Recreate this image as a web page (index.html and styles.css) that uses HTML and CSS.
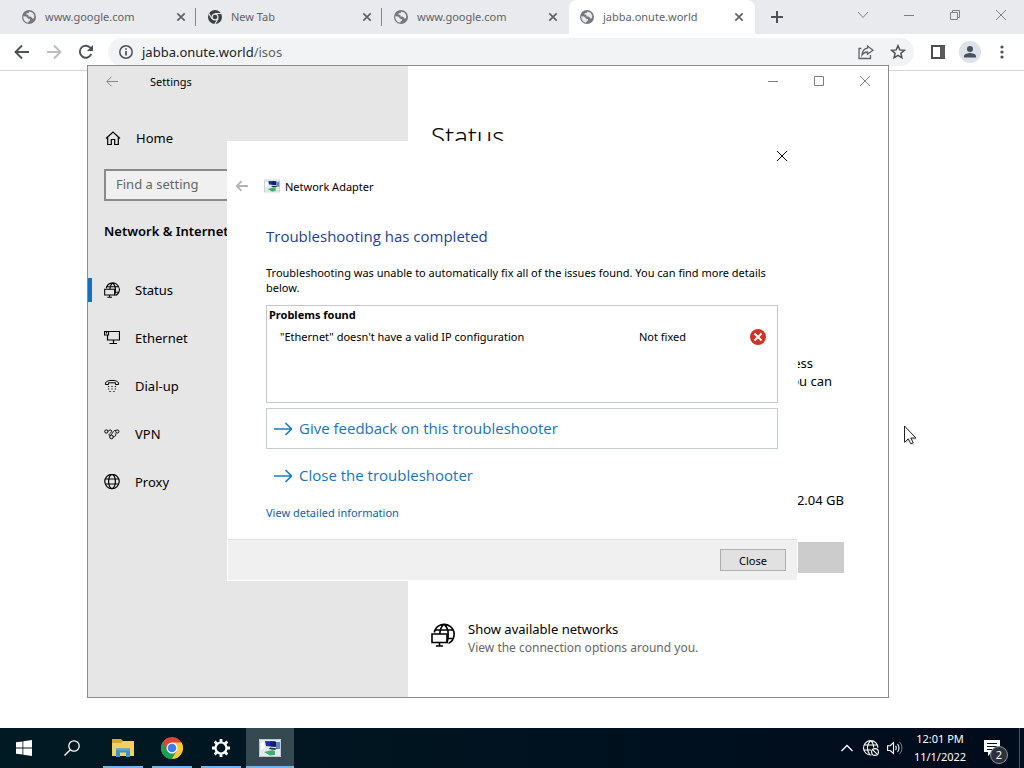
FILE: index.html
```html
<!DOCTYPE html>
<html lang="en">
<head>
  <meta charset="UTF-8" />
  <meta name="viewport" content="width=device-width, initial-scale=1.0" />
  <title>jabba.onute.world/isos</title>
  <link rel="stylesheet" href="styles.css">
</head>
<body>
  <!-- shared icons -->
  <svg class="sprite" width="0" height="0" aria-hidden="true">
    <symbol id="i-world" viewBox="0 0 16 16">
      <circle cx="8" cy="8" r="7" fill="#75787c"/>
      <path d="M8.5 2.6l3.2 1.2 1.6 2.7-.3 2.8-1.8.2-1-1.7-2.6-.2-.4-1.8H5.4l.2-1.6 1.9-.2z" fill="#e8eaed"/>
      <path d="M2.2 7.2l3 .4 2 2.1 1.9.5-.3 1.5-1.3.7-.2 1.4C4.2 13.4 2.2 10.5 2.2 7.2z" fill="#e8eaed"/>
    </symbol>
    <symbol id="i-tabclose" viewBox="0 0 10 10">
      <path d="M1.3 1.3l7.4 7.4M8.7 1.3l-7.4 7.4" stroke="#5f6368" stroke-width="1.7"/>
    </symbol>
    <symbol id="i-close" viewBox="0 0 12 12">
      <path d="M1 1l10 10M11 1L1 11" stroke="currentColor" fill="none"/>
    </symbol>
    <symbol id="i-min" viewBox="0 0 12 12">
      <path d="M1 6.5h10" stroke="currentColor"/>
    </symbol>
    <symbol id="i-back" viewBox="0 0 12 12">
      <path d="M12 5.5H1M5.5 .7L.8 5.5l4.7 4.8" stroke="currentColor" fill="none"/>
    </symbol>
    <symbol id="i-netglobe" viewBox="0 0 24 24">
      <path d="M3.3 9.5A10 10 0 1 1 17.5 20.4M13 1.2C10.5 3.2 9 6.5 8.8 11M13 1.2c2.8 2.5 4.2 6 4.2 9.8 0 3.5-.4 6-1.2 9M4.2 7h17.800M17 15.500h5" fill="none" stroke="currentColor" stroke-width="1.6"/>
      <path d="M1 11h15v8.500H1zM8.500 19.500v3.500M5 23h7" fill="none" stroke="currentColor" stroke-width="1.6"/>
    </symbol>
    <symbol id="i-arrow" viewBox="0 0 18 14">
      <path d="M0 7h17M11.5 1l6 6-6 6" fill="none" stroke="#1a7cc4" stroke-width="1.6"/>
    </symbol>
    <symbol id="i-adapter" viewBox="0 0 22 18">
      <path d="M0 0h22v18H0z" fill="#e4ebef"/>
      <path d="M.5.5h21v17H.5z" fill="none" stroke="#b9c9d2"/>
      <path d="M6 2l10 .5V8L7 7z" fill="#1a2fa0"/>
      <path d="M11 2.3l6 .2V8l-5-.7z" fill="#15206b"/>
      <path d="M17 3h4v7h-4z" fill="#5f86c4"/>
      <path d="M5 13l8-2 3 1v4l-5 .5z" fill="#3fae6a"/>
      <path d="M11 8.5l7 1-2 1.5-6-1z" fill="#20303c"/>
      <path d="M2 4l3-1 1 6-4 2z" fill="#fff"/>
    </symbol>
  </svg>

  <div class="browser">
    <div class="tabstrip">
      <div class="tab">
        <svg class="favicon"><use href="#i-world"/></svg>
        <span>www.google.com</span>
        <button aria-label="Close tab"><svg width="10" height="10"><use href="#i-tabclose"/></svg></button>
      </div>
      <div class="tab">
        <svg class="favicon" viewBox="0 0 16 16">
          <circle cx="8" cy="8" r="7" fill="#3c4043"/>
          <path d="M8 4.5h6.5M5 9.8L1.7 4.3M11 9.8L7.8 15.2" stroke="#e8eaed" stroke-width="1.2"/>
          <circle cx="8" cy="8" r="3.5" fill="#e8eaed"/>
          <circle cx="8" cy="8" r="2.3" fill="#3c4043"/>
        </svg>
        <span>New Tab</span>
        <button aria-label="Close tab"><svg width="10" height="10"><use href="#i-tabclose"/></svg></button>
      </div>
      <div class="tab last">
        <svg class="favicon"><use href="#i-world"/></svg>
        <span>www.google.com</span>
        <button aria-label="Close tab"><svg width="10" height="10"><use href="#i-tabclose"/></svg></button>
      </div>
      <div class="tab active">
        <svg class="favicon"><use href="#i-world"/></svg>
        <span>jabba.onute.world</span>
        <button aria-label="Close tab"><svg width="10" height="10"><use href="#i-tabclose"/></svg></button>
      </div>
      <button class="new-tab" aria-label="New tab">
        <svg width="12" height="12"><path d="M6 0v12M0 6h12" stroke="#4d5156" stroke-width="2"/></svg>
      </button>
      <div class="caption">
        <button aria-label="Search tabs"><svg width="12" height="12"><path d="M1 3l5 5.5L11 3" stroke="currentColor" fill="none"/></svg></button>
        <button aria-label="Minimize"><svg width="12" height="12"><use href="#i-min"/></svg></button>
        <button aria-label="Restore"><svg width="12" height="12"><path d="M1.5 3.5h7v7h-7zM3.5 3.5v-2h7v7h-2" stroke="currentColor" fill="none"/></svg></button>
        <button aria-label="Close"><svg width="12" height="12"><use href="#i-close"/></svg></button>
      </div>
    </div>
    <div class="toolbar">
      <button aria-label="Back"><svg width="16" height="16" viewBox="0 0 16 16"><path d="M15 8H2M8 1.5L1.5 8 8 14.5" stroke="#4d5156" stroke-width="1.9" fill="none"/></svg></button>
      <button aria-label="Forward"><svg width="16" height="16" viewBox="0 0 16 16"><path d="M1 8h13M8 1.5L14.5 8 8 14.5" stroke="#babcbe" stroke-width="1.9" fill="none"/></svg></button>
      <button aria-label="Reload"><svg width="16" height="16" viewBox="0 0 16 16"><path d="M13.3 10.2A6 6 0 1 1 12.8 4.3" stroke="#4d5156" stroke-width="1.9" fill="none"/><path d="M15 1v6H9z" fill="#4d5156"/></svg></button>
      <div class="omnibox">
        <svg width="16" height="16" viewBox="0 0 16 16"><circle cx="8" cy="8" r="6.2" fill="none" stroke="#4d5156" stroke-width="1.5"/><path d="M8 7v4.5M8 4.2v1.6" stroke="#4d5156" stroke-width="1.7"/></svg>
        <div class="url">jabba.onute.world<span>/isos</span></div>
        <button aria-label="Share"><svg width="16" height="16" viewBox="0 0 16 16"><path d="M3.5 4.5H1v10h11.500V11M9.500 2l5.500 4.200-5.500 4V8C7 8 5.500 8.800 4 11c.3-3.600 2-6.200 5.500-6.800z" fill="none" stroke="#5f6368" stroke-width="1.3"/></svg></button>
        <button aria-label="Bookmark"><svg width="16" height="16" viewBox="0 0 16 16"><path d="M8 1.7l1.8 4.2 4.6.4-3.5 3 1 4.5L8 11.4l-3.9 2.4 1-4.5-3.5-3 4.6-.4z" fill="none" stroke="#4d5156" stroke-width="1.5"/></svg></button>
      </div>
      <div class="tools">
        <button aria-label="Side panel"><svg width="14" height="14"><path d="M1 1h12v12H1z" fill="none" stroke="#4d4d50" stroke-width="2"/><path d="M9 1h5v12H9z" fill="#5a5a5e"/></svg></button>
        <button class="avatar" aria-label="Profile"><svg width="14" height="14"><circle cx="7" cy="4" r="3" fill="#46525e"/><path d="M1 12.5V11c0-2 4-3 6-3s6 1 6 3v1.5z" fill="#46525e"/></svg></button>
        <button aria-label="Menu"><svg width="4" height="14"><circle cx="2" cy="2" r="1.6" fill="#4d5156"/><circle cx="2" cy="7" r="1.6" fill="#4d5156"/><circle cx="2" cy="12" r="1.6" fill="#4d5156"/></svg></button>
      </div>
    </div>
  </div>

  <div class="settings">
    <div class="sidebar">
      <div class="titlebar">
        <button aria-label="Back"><svg width="12" height="12"><use href="#i-back"/></svg></button>
        <span>Settings</span>
      </div>
      <a class="nav-item home" href="#">
        <svg width="16" height="16" viewBox="0 0 16 16"><path d="M1 8.5L8 2l7 6.5M2.7 7.5v7h3.6V9.5h3.4v5h3.6v-7" fill="none" stroke="currentColor" stroke-width="1.2"/></svg>
        Home
      </a>
      <input class="search" type="text" placeholder="Find a setting" aria-label="Find a setting">
      <h2>Network &amp; Internet</h2>
      <nav>
        <a class="nav-item current" href="#">
          <svg width="16" height="16"><use href="#i-netglobe"/></svg>Status
        </a>
        <a class="nav-item" href="#">
          <svg width="16" height="16" viewBox="0 0 16 16"><path d="M4.5 1.5h11v8.5h-12V5M9.5 10v3M5.5 13.5h7.5M.5 1.5h4v3.5h-4zM2.5 1.5v2" fill="none" stroke="currentColor" stroke-width="1.2"/></svg>Ethernet
        </a>
        <a class="nav-item" href="#">
          <svg width="16" height="16" viewBox="0 0 16 16"><path d="M1.5 5C2.5 1.5 13.5 1.5 14.5 5v1.5h-3V4.8h-7v1.7h-3z" fill="none" stroke="currentColor"/><path d="M4 8.5h1.2M7.4 8.5h1.2M10.8 8.5H12M4 11h1.2M7.4 11h1.2M10.8 11H12M5.5 13.5h1.2M9.3 13.5h1.2" stroke="currentColor" stroke-width="1.2"/></svg>Dial-up
        </a>
        <a class="nav-item" href="#">
          <svg width="16" height="16" viewBox="0 0 16 16"><g fill="none" stroke="currentColor"><circle cx="2.3" cy="5.5" r="1.6"/><circle cx="13.3" cy="5.5" r="1.6"/><circle cx="7.5" cy="11" r="1.8"/><path d="M3.9 5.5c1.5-2.5 4.6-1.5 3.6.3-.8 1.5-3.5 2.3-2 4M11.9 4.7C9.5 3.5 9.5 6.5 6.5 9.3M9.3 10.5c2 .5 3.2-1.5 2-3"/></g></svg>VPN
        </a>
        <a class="nav-item" href="#">
          <svg width="16" height="16" viewBox="0 0 16 16"><g fill="none" stroke="currentColor" stroke-width="1.2"><circle cx="8" cy="7.5" r="7.2"/><ellipse cx="8" cy="7.5" rx="3.4" ry="7.2"/><path d="M1.5 5h13M1.5 10h13"/></g></svg>Proxy
        </a>
      </nav>
    </div>
    <div class="main">
      <div class="caption">
        <button aria-label="Minimize"><svg width="12" height="12"><use href="#i-min"/></svg></button>
        <button aria-label="Maximize"><svg width="12" height="12"><path d="M1.5 1.5h9v9h-9z" stroke="currentColor" fill="none"/></svg></button>
        <button aria-label="Close"><svg width="12" height="12"><use href="#i-close"/></svg></button>
      </div>
      <div class="content">
        <h1>Status</h1>
        <p class="note"><span>access</span><br>you can</p>
        <p class="usage">2.04 GB</p>
        <button class="data-usage" aria-label="Data usage"></button>
        <a class="networks" href="#">
          <svg width="24" height="24"><use href="#i-netglobe"/></svg>
          <span>Show available networks<small>View the connection options around you.</small></span>
        </a>
      </div>
    </div>
  </div>

  <div class="dialog" role="dialog" aria-labelledby="dialog-title">
    <button class="dialog-close" aria-label="Close window"><svg width="12" height="12"><use href="#i-close"/></svg></button>
    <div class="dialog-head">
      <button aria-label="Back"><svg width="12" height="12" viewBox="0 0 12 12"><path d="M12 6H1M5.5 1.2L.8 6l4.7 4.8" stroke="#b4b4b4" stroke-width="1.8" fill="none"/></svg></button>
      <svg width="16" height="14" viewBox="0 0 22 18"><use href="#i-adapter" width="22" height="18"/></svg>
      <span id="dialog-title">Network Adapter</span>
    </div>
    <div class="dialog-body">
      <h2>Troubleshooting has completed</h2>
      <p>Troubleshooting was unable to automatically fix all of the issues found. You can find more details below.</p>
      <div class="problems">
        <table>
          <thead>
            <tr><th colspan="3">Problems found</th></tr>
          </thead>
          <tbody>
            <tr>
              <td>"Ethernet" doesn't have a valid IP configuration</td>
              <td class="state">Not fixed</td>
              <td class="mark"><svg width="16" height="16" viewBox="0 0 16 16"><circle cx="8" cy="8" r="8" fill="#cf3526"/><path d="M4.5 4.5l7 7M11.5 4.5l-7 7" stroke="#fff" stroke-width="1.9"/></svg></td>
            </tr>
          </tbody>
        </table>
      </div>
      <button class="command focused"><svg width="18" height="14"><use href="#i-arrow"/></svg>Give feedback on this troubleshooter</button>
      <button class="command"><svg width="18" height="14"><use href="#i-arrow"/></svg>Close the troubleshooter</button>
      <a class="details" href="#">View detailed information</a>
    </div>
    <div class="dialog-foot">
      <button>Close</button>
    </div>
  </div>

  <svg class="cursor" width="16" height="22" viewBox="0 0 16 22"><path d="M2 3v16l3.7-3.4 2.6 5 2.5-1.2-2.5-4.7h4.9z" fill="#999" opacity=".4"/><path d="M.5 1v16.3l3.8-3.5 2.5 5 2.4-1.1-2.4-4.7h5.1z" fill="#fff" stroke="#222"/></svg>

  <div class="taskbar">
    <button class="task" aria-label="Start"><svg width="16" height="16" viewBox="0 0 16 16"><path d="M0 2.3L6.5 1.4v6.2H0zM7.3 1.3L16 0v7.6H7.3zM0 8.4h6.5v6.2L0 13.7zM7.3 8.4H16V16l-8.7-1.3z" fill="#fff"/></svg></button>
    <button class="task" aria-label="Search"><svg width="16" height="16" viewBox="0 0 16 16"><circle cx="10" cy="6" r="5.2" fill="none" stroke="#fff" stroke-width="1.3"/><path d="M6.3 9.7L.5 15.5" stroke="#fff" stroke-width="1.4"/></svg></button>
    <div class="apps">
      <button class="task open" aria-label="File Explorer"><svg width="22" height="18" viewBox="0 0 22 18"><path d="M0 0h9l2 2h11v4H0z" fill="#dca32f"/><path d="M0 4h9l2-2h11v15H0z" fill="#f6cf63"/><path d="M4 18V9.5h14V18h-4v-4.5H8V18z" fill="#3f92c9"/><path d="M4 9.5h14v2H4z" fill="#5ea7d2"/></svg></button>
      <button class="task open" aria-label="Chrome"><svg width="22" height="22" viewBox="0 0 22 22"><path d="M11 11L1.47 5.5A11 11 0 0 1 20.53 5.5z" fill="#dc4436"/><path d="M11 11L1.47 5.5A11 11 0 0 0 11 22z" fill="#1e9e55"/><path d="M11 11V22A11 11 0 0 0 20.53 5.5z" fill="#fbc934"/><path d="M11 5.5h9.53L15.8 13.7z" fill="#fbc934"/><path d="M11 5.5L1.47 5.5 6.2 13.8z" fill="#dc4436"/><path d="M1.47 5.5L6.2 13.8 11 16.5 15.8 13.7 11 22A11 11 0 0 1 1.47 5.5z" fill="#1e9e55"/><circle cx="11" cy="11" r="5.5" fill="#fff"/><circle cx="11" cy="11" r="4.3" fill="#3c7df0"/></svg></button>
      <button class="task open" aria-label="Settings"><svg width="18" height="18" viewBox="0 0 18 18"><circle cx="9" cy="9" r="5.5" fill="none" stroke="#fff" stroke-width="2.2"/><path d="M9 0v3M9 15v3M0 9h3M15 9h3M2.6 2.6l2.2 2.2M13.2 13.2l2.2 2.2M2.6 15.4l2.2-2.2M13.2 4.8l2.2-2.2" stroke="#fff" stroke-width="2.8"/></svg></button>
      <button class="task open selected" aria-label="Network Adapter"><svg width="22" height="18"><use href="#i-adapter"/></svg></button>
    </div>
    <div class="tray">
      <button aria-label="Show hidden icons"><svg width="12" height="8"><path d="M.5 7L6 1.5 11.5 7" stroke="#fff" stroke-width="1.3" fill="none"/></svg></button>
      <button aria-label="Network"><svg width="18" height="18" viewBox="0 0 18 18"><g fill="none" stroke="#fff" stroke-width="1.1"><path d="M9.5 16A7.2 7.2 0 1 1 15.9 8.8M8.7 1.6C4.5 5 4.5 12 8 16M8.7 1.6c2 1.8 3 4.2 3 7M2 6h13M2 11h7"/><circle cx="13" cy="13" r="3.4"/><path d="M10.7 10.7l4.6 4.6"/></g></svg></button>
      <button aria-label="Volume"><svg width="16" height="14" viewBox="0 0 16 14"><path d="M.6 4.7h2.6L6.5 1.5v11L3.2 9.5H.6zM8.5 5c1 1 1 3 0 4M10.5 3c2 2.2 2 5.8 0 8" fill="none" stroke="#fff" stroke-width="1.1"/><path d="M12.7 1.2c3 3.2 3 8.4 0 11.6" fill="none" stroke="#7d868e"/></svg></button>
      <div class="clock">12:01 PM<br>11/1/2022</div>
      <button class="notices" aria-label="Notifications">
        <svg width="16" height="16" viewBox="0 0 16 16"><path d="M0 0h16v12H8l-4 4v-4H0z" fill="#fff"/><path d="M3 3.5h10M3 6.5h10M3 9.5h6" stroke="#00101c" stroke-width="1.1"/></svg>
        <span class="badge">2</span>
      </button>
    </div>
  </div>
</body>
</html>
```
FILE: styles.css
```css
* {
  box-sizing: border-box;
}
body {
  margin: 0;
  min-height: 100vh;
  display: flex;
  flex-direction: column;
  justify-content: space-between;
  position: relative;
  background: #fff;
  font-family: "Noto Sans", "Open Sans", sans-serif;
  font-size: 13px;
  line-height: 18px;
  color: #000;
}
h1, h2, p {
  margin: 0;
}
a {
  color: inherit;
  text-decoration: none;
}
button {
  display: flex;
  align-items: center;
  justify-content: center;
  padding: 0;
  border: none;
  background: none;
  font: inherit;
  color: inherit;
}
svg {
  display: block;
  flex: none;
}
.sprite {
  position: absolute;
}

/* browser */
.tabstrip {
  display: flex;
  height: 34px;
  padding-left: 11px;
  background: #e8eaed;
  color: #5f6368;
  font-size: 11px;
}
.tab {
  display: flex;
  align-items: center;
  width: 186px;
  padding: 0 11px 0 10px;
  position: relative;
}
.tab::after {
  content: "";
  position: absolute;
  right: 1px;
  top: 8px;
  width: 1px;
  height: 18px;
  background: #85898d;
}
.tab.last::after, .tab.active::after {
  display: none;
}
.tab.active {
  background: #fff;
  border-radius: 8px 8px 0 0;
}
.tab span {
  flex: 1;
}
.favicon {
  width: 16px;
  height: 16px;
  margin-right: 8px;
}
.new-tab {
  width: 44px;
}
.caption {
  display: flex;
  margin-left: auto;
  color: #808080;
}
.caption button {
  width: 46px;
  height: 30px;
}
.toolbar {
  display: flex;
  align-items: center;
  height: 37px;
  padding-left: 6px;
  border-bottom: 1px solid #d2d4d6;
}
.toolbar > button {
  width: 32px;
}
.omnibox {
  flex: 1;
  display: flex;
  align-items: center;
  height: 28px;
  margin-left: 6px;
  padding-left: 10px;
  border-radius: 14px;
  background: #f1f3f4;
}
.omnibox button {
  width: 32px;
}
.url {
  flex: 1;
  margin-left: 8px;
  color: #202124;
}
.url span {
  color: #5f6368;
}
.tools {
  display: flex;
  align-items: center;
  padding: 0 6px 0 8px;
}
.tools button {
  width: 32px;
}
.tools .avatar {
  width: 22px;
  height: 22px;
  margin: 0 5px;
  border-radius: 50%;
  background: #dde1e8;
}

/* settings window */
.settings {
  position: absolute;
  top: 65px;
  left: 87px;
  width: 802px;
  display: flex;
  border: 1px solid #8c8c8c;
  background: #fff;
}
.sidebar {
  width: 320px;
  background: #e6e6e6;
}
.titlebar {
  display: flex;
  align-items: center;
  height: 32px;
  padding-left: 18px;
  font-size: 11px;
}
.titlebar button {
  color: #888;
}
.titlebar span {
  margin-left: 32px;
}
.nav-item {
  display: flex;
  align-items: center;
  gap: 15px;
  height: 48px;
  padding-left: 16px;
  position: relative;
}
.nav-item.home {
  margin-top: 16px;
  padding-left: 17px;
}
.nav-item.current::before {
  content: "";
  position: absolute;
  left: 0;
  width: 4px;
  height: 24px;
  background: #0f73c8;
}
.search {
  display: block;
  width: 288px;
  height: 32px;
  margin: 7px 16px 0;
  padding: 0 10px 2px;
  border: 2px solid #8a8a8a;
  background: #f0f0f0;
  font: inherit;
}
.search::placeholder {
  color: #666;
}
.sidebar h2 {
  margin: 21px 0 26px 16px;
  font-size: 13px;
  font-weight: 600;
  line-height: 18px;
}
.main {
  flex: 1;
}
.main .caption {
  justify-content: flex-end;
}
.content {
  padding: 24px 44px 39px 23px;
}
.content h1 {
  font-size: 26px;
  font-weight: 300;
  line-height: 32px;
}
.note, .usage {
  text-align: right;
}
.note {
  margin-top: 202px;
  padding-right: 12px;
}
.note span {
  margin-right: 19px;
}
.usage {
  margin-top: 101px;
}
.data-usage {
  width: 200px;
  height: 31px;
  margin: 33px 0 47px auto;
  background: #ccc;
}
.networks {
  display: flex;
  gap: 13px;
}
.networks svg {
  margin-top: 3px;
}
.networks small {
  display: block;
  font-size: 12px;
  line-height: 20px;
  color: #666;
}

/* troubleshooter */
.dialog {
  position: absolute;
  top: 141px;
  left: 227px;
  width: 571px;
  border: solid #fff;
  border-width: 0 1px 1px;
  background: #fff;
  font-size: 11px;
  line-height: 15px;
}
.dialog-close {
  width: 30px;
  height: 30px;
  margin-left: auto;
}
.dialog-head {
  display: flex;
  align-items: center;
  height: 30px;
  padding-left: 8px;
}
.dialog-head > svg {
  margin: 0 5px 0 16px;
}
.dialog-body {
  padding: 24px 19px 19px 38px;
}
.dialog-body h2 {
  margin-bottom: 18px;
  font-family: "Open Sans", sans-serif;
  font-size: 15px;
  font-weight: 400;
  line-height: 22px;
  color: #1f3f8f;
}
.problems {
  height: 98px;
  margin: 10px 0 5px;
  border: 1px solid #c3c7cb;
}
.problems table {
  width: 100%;
  border-collapse: collapse;
}
.problems th {
  padding: 1px 2px 3px;
  text-align: left;
}
.problems td {
  padding: 4px 0 4px 13px;
}
.problems .state {
  width: 111px;
  padding-left: 0;
}
.problems .mark {
  width: 27px;
  padding: 0 11px 0 0;
}
.command {
  justify-content: flex-start;
  gap: 7px;
  width: 100%;
  height: 41px;
  margin-bottom: 6px;
  padding-left: 7px;
  border: 1px solid transparent;
  font-family: "Open Sans", sans-serif;
  font-size: 15px;
  color: #1a74b8;
}
.command.focused {
  border-color: #c3ced4;
}
.details {
  display: block;
  margin-top: 9px;
  color: #1260ad;
}
.dialog-foot {
  display: flex;
  justify-content: flex-end;
  padding: 9px 11px;
  border-top: 1px solid #dfdfdf;
  background: #f0f0f0;
}
.dialog-foot button {
  width: 66px;
  height: 22px;
  border: 1px solid #adadad;
  background: #e1e1e1;
}
.cursor {
  position: absolute;
  top: 425px;
  left: 904px;
}

/* taskbar */
.taskbar {
  display: flex;
  height: 40px;
  background: linear-gradient(90deg, #001a23, #000b1b);
  color: #fff;
}
.task {
  width: 48px;
  height: 40px;
  position: relative;
}
.apps {
  display: flex;
  gap: 1px;
  margin-left: 3px;
}
.task.open::after {
  content: "";
  position: absolute;
  left: 4px;
  right: 4px;
  bottom: 0;
  height: 2px;
  background: #76b4e6;
}
.task.selected {
  background: #364950;
}
.task.selected::after {
  left: 0;
  right: 0;
}
.tray {
  display: flex;
  margin-left: auto;
  margin-right: 4px;
  border-right: 1px solid #4c5560;
}
.tray button {
  width: 24px;
}
.clock {
  width: 66px;
  padding-top: 2px;
  font-size: 11px;
  text-align: center;
}
.tray .notices {
  width: 46px;
  justify-content: flex-start;
  padding-left: 11px;
  position: relative;
}
.badge {
  position: absolute;
  left: 17px;
  top: 18px;
  width: 18px;
  height: 18px;
  border: 1px solid #8a9099;
  border-radius: 50%;
  background: #2a333d;
  font-size: 11px;
  line-height: 16px;
}
```
